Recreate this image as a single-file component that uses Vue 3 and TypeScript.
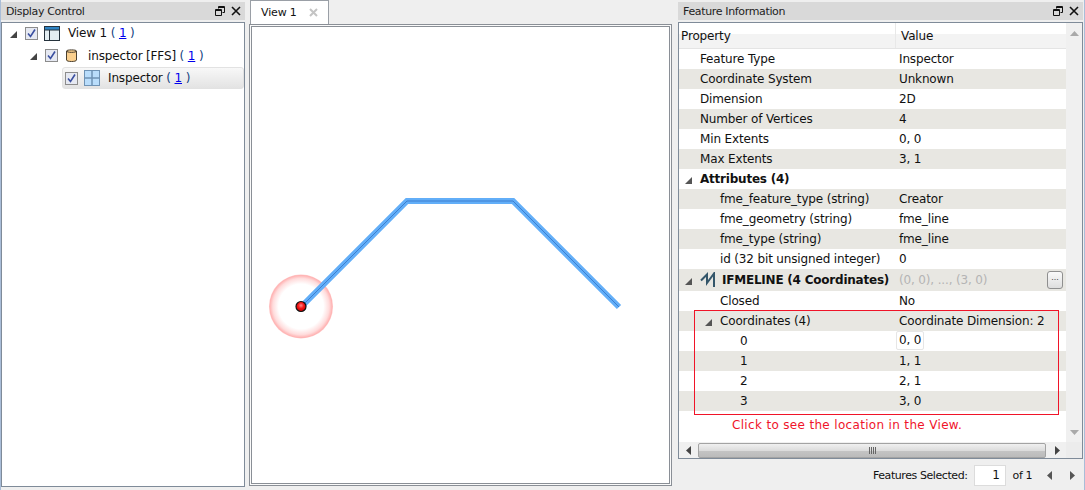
<template>
  <div class="app">
    <section class="dock left">
      <header class="dock-title">
        <span>Display Control</span>
        <span class="title-btns">
          <svg width="10" height="10" viewBox="0 0 10 10"><path d="M3.500 2.500V.5h6v6H7.500M.5 3.500h6v6h-6zM.5 4.500h6M3.500 1.500h6" fill="none" stroke="#111" /></svg>
          <svg width="10" height="10" viewBox="0 0 10 10"><path d="M1 1l8 8M9 1l-8 8" stroke="#111" stroke-width="1.600" /></svg>
        </span>
      </header>
      <div class="dock-body tree">
        <div class="node lvl0">
          <svg class="twist" width="7" height="7" viewBox="0 0 7 7"><polygon points="7,0 7,7 0,7" fill="#444" /></svg>
          <svg class="check" width="13" height="13" viewBox="0 0 13 13"><rect x=".5" y=".5" width="12" height="12" fill="#e6e9f2" stroke="#8c8c8c" /><path d="M3 6.500l2.500 3L10 2.500" fill="none" stroke="#3a4fa0" stroke-width="1.600" /></svg>
          <svg class="icon" width="16" height="15" viewBox="0 0 16 15"><rect x=".5" y=".5" width="15" height="14" fill="#e4eef2" stroke="#25323c" /><rect x="1" y="1" width="14" height="3" fill="#2f84c4" /><path d="M5.500 4v10M1 4h14" stroke="#25323c" /></svg>
          <span class="label">View 1 <span class="paren">(</span> <a class="link">1</a> <span class="paren">)</span></span>
        </div>
        <div class="node lvl1">
          <svg class="twist" width="7" height="7" viewBox="0 0 7 7"><polygon points="7,0 7,7 0,7" fill="#444" /></svg>
          <svg class="check" width="13" height="13" viewBox="0 0 13 13"><rect x=".5" y=".5" width="12" height="12" fill="#e6e9f2" stroke="#8c8c8c" /><path d="M3 6.500l2.500 3L10 2.500" fill="none" stroke="#3a4fa0" stroke-width="1.600" /></svg>
          <svg class="icon" width="11" height="15" viewBox="0 0 11 15"><path d="M.5 3C.5 1.500 10.500 1.500 10.500 3v9c0 2-10 2-10 0z" fill="#fbd08e" stroke="#4a4030" /><path d="M.5 3c0 1.800 10 1.800 10 0" fill="none" stroke="#4a4030" /></svg>
          <span class="label">inspector [FFS] <span class="paren">(</span> <a class="link">1</a> <span class="paren">)</span></span>
        </div>
        <div class="node lvl2">
          <svg class="check" width="13" height="13" viewBox="0 0 13 13"><rect x=".5" y=".5" width="12" height="12" fill="#e6e9f2" stroke="#8c8c8c" /><path d="M3 6.500l2.500 3L10 2.500" fill="none" stroke="#3a4fa0" stroke-width="1.600" /></svg>
          <svg class="icon" width="16" height="16" viewBox="0 0 16 16"><rect x=".5" y=".5" width="15" height="15" fill="#b9ddfb" stroke="#6f93b5" /><path d="M8 0v16M0 8h16" stroke="#6f93b5" stroke-width="1.500" /></svg>
          <span class="label">Inspector <span class="paren">(</span> <a class="link">1</a> <span class="paren">)</span></span>
        </div>
      </div>
    </section>

    <section class="center">
      <div class="tab">
        <span>View 1</span>
        <svg width="9" height="9" viewBox="0 0 9 9"><path d="M1 1l7 7M8 1l-7 7" stroke="#c4c4c4" stroke-width="2" /></svg>
      </div>
      <div class="pane">
        <div class="canvas">
          <svg width="100%" height="100%">
            <defs>
              <radialGradient id="halo">
                <stop offset="0.7" stop-color="#ffffff" />
                <stop offset="0.88" stop-color="#ffdcdc" />
                <stop offset="0.97" stop-color="#ffb4b4" />
                <stop offset="1" stop-color="#ffc8c8" />
              </radialGradient>
              <radialGradient id="ball" cx="0.5" cy="0.4" r="0.65">
                <stop offset="0" stop-color="#ff8a8a" />
                <stop offset="0.45" stop-color="#f51515" />
                <stop offset="1" stop-color="#c00000" />
              </radialGradient>
            </defs>
            <circle cx="49" cy="279.500" r="32" fill="url(#halo)" />
            <polyline :points="linePoints" fill="none" stroke="#62aef8" stroke-width="6" stroke-linejoin="miter" />
            <polyline :points="linePoints" fill="none" stroke="#3c7fd0" stroke-width="1" />
            <circle cx="49" cy="279.500" r="5" fill="url(#ball)" stroke="#111" stroke-width="1.200" />
          </svg>
        </div>
      </div>
    </section>

    <section class="dock right">
      <header class="dock-title">
        <span>Feature Information</span>
        <span class="title-btns">
          <svg width="10" height="10" viewBox="0 0 10 10"><path d="M3.500 2.500V.5h6v6H7.500M.5 3.500h6v6h-6zM.5 4.500h6M3.500 1.500h6" fill="none" stroke="#111" /></svg>
          <svg width="10" height="10" viewBox="0 0 10 10"><path d="M1 1l8 8M9 1l-8 8" stroke="#111" stroke-width="1.600" /></svg>
        </span>
      </header>
      <div class="info-box">
        <div class="info-main">
          <div class="table">
            <div class="thead">
              <div class="th first">Property</div>
              <div class="th second">Value</div>
            </div>
            <div
              v-for="row in rows"
              :key="row.name"
              class="row"
              :class="{ alt: row.alt, bold: row.kind === 'section', geom: row.kind === 'geom' }"
            >
              <div class="name" :style="{ paddingLeft: row.indent + 'px' }">
                <svg v-if="row.open" class="arrow" width="7" height="7" viewBox="0 0 7 7"><polygon points="7,0 7,7 0,7" fill="#555" /></svg>
                <svg v-if="row.kind === 'geom'" class="geom-icon" width="16" height="16" viewBox="0 0 16 16"><path d="M1 8.500L7 2.500V11L14 1.500V15" fill="none" stroke="#34566a" stroke-width="2" /></svg>
                <span>{{ row.name }}</span>
              </div>
              <div class="value" :class="{ muted: row.kind === 'geom' }">
                <span :class="{ focus: row.name === '0' }">{{ row.value }}</span>
              </div>
              <button v-if="row.kind === 'geom'" class="more">...</button>
            </div>
          </div>
          <div class="vscroll">
            <svg width="9" height="5" viewBox="0 0 9 5"><polygon points="4.500,0 9,5 0,5" fill="#a9a9a9" /></svg>
            <svg width="9" height="5" viewBox="0 0 9 5"><polygon points="0,0 9,0 4.500,5" fill="#a9a9a9" /></svg>
          </div>
        </div>
        <div class="hscroll">
          <svg class="h-arrow" width="5" height="9" viewBox="0 0 5 9"><polygon points="5,0 5,9 0,4.500" fill="#444" /></svg>
          <div class="thumb"><i></i><i></i><i></i><i></i></div>
          <svg class="h-arrow" width="5" height="9" viewBox="0 0 5 9"><polygon points="0,0 0,9 5,4.500" fill="#444" /></svg>
          <div class="corner"></div>
        </div>
        <div class="callout"></div>
        <div class="callout-note">Click to see the location in the View.</div>
      </div>
      <footer class="pager">
        <span>Features Selected:</span>
        <span class="page-input">1</span>
        <span class="of">of 1</span>
        <svg width="5" height="9" viewBox="0 0 5 9"><polygon points="5,0 5,9 0,4.500" fill="#555" /></svg>
        <svg class="next" width="5" height="9" viewBox="0 0 5 9"><polygon points="0,0 0,9 5,4.500" fill="#555" /></svg>
      </footer>
    </section>
  </div>
</template>

<script setup lang="ts">
interface Row {
  name: string;
  value: string;
  indent: number;
  alt?: boolean;
  open?: boolean;
  kind?: 'section' | 'geom';
}

const linePoints = '49,280 155,174 261,174 367,280';

const rows: Row[] = [
  { name: 'Feature Type', value: 'Inspector', indent: 21 },
  { name: 'Coordinate System', value: 'Unknown', indent: 21, alt: true },
  { name: 'Dimension', value: '2D', indent: 21 },
  { name: 'Number of Vertices', value: '4', indent: 21, alt: true },
  { name: 'Min Extents', value: '0, 0', indent: 21 },
  { name: 'Max Extents', value: '3, 1', indent: 21, alt: true },
  { name: 'Attributes (4)', value: '', indent: 6, open: true, kind: 'section' },
  { name: 'fme_feature_type (string)', value: 'Creator', indent: 41, alt: true },
  { name: 'fme_geometry (string)', value: 'fme_line', indent: 41 },
  { name: 'fme_type (string)', value: 'fme_line', indent: 41, alt: true },
  { name: 'id (32 bit unsigned integer)', value: '0', indent: 41 },
  { name: 'IFMELINE (4 Coordinates)', value: '(0, 0), ..., (3, 0)', indent: 6, alt: true, open: true, kind: 'geom' },
  { name: 'Closed', value: 'No', indent: 41 },
  { name: 'Coordinates (4)', value: 'Coordinate Dimension: 2', indent: 26, alt: true, open: true },
  { name: '0', value: '0, 0', indent: 61 },
  { name: '1', value: '1, 1', indent: 61, alt: true },
  { name: '2', value: '2, 1', indent: 61 },
  { name: '3', value: '3, 0', indent: 61, alt: true },
];
</script>

<style>
html,
body {
  margin: 0;
  overflow: hidden;
}
</style>

<style scoped>
.app {
  display: flex;
  box-sizing: border-box;
  width: 1085px;
  height: 490px;
  background: #efefef;
  border-left: 1px solid #a9bdd8;
  border-right: 1px solid #a9bdd8;
  font-family: "DejaVu Sans", sans-serif;
  font-size: 12px;
  letter-spacing: -0.15px;
  color: #111;
}

.dock {
  display: flex;
  flex-direction: column;
}

.left {
  width: 244px;
  padding-bottom: 3px;
}

.right {
  width: 405px;
  margin-left: 6px;
}

.dock-title {
  display: flex;
  justify-content: space-between;
  align-items: center;
  flex: none;
  height: 18px;
  margin-top: 2px;
  padding: 0 4px 0 5px;
  background: #d9d9d9;
  font-size: 11px;
  letter-spacing: -0.35px;
  color: #222;
}

.title-btns {
  display: flex;
  align-items: center;
  gap: 6px;
}

.dock-body {
  flex: 1;
  margin-top: 2px;
  background: #fff;
  border: 1px solid #7f8b99;
}

.node {
  display: flex;
  align-items: center;
  box-sizing: border-box;
}

.lvl0 {
  height: 20px;
  padding-left: 8px;
}

.lvl1 {
  height: 24px;
  padding: 1px 0 0 28px;
}

.lvl2 {
  height: 22px;
  margin-left: 60px;
  padding-left: 2px;
  border: 1px solid #e2e2e2;
  border-radius: 3px;
  background: linear-gradient(#f8f8f8, #e3e3e3);
}

.twist {
  margin-right: 8px;
  margin-top: 2px;
}

.check {
  margin-right: 6px;
}

.lvl1 .icon {
  margin: 0 11px 0 2px;
}

.lvl0 .icon,
.lvl2 .icon {
  margin-right: 8px;
}

.paren {
  color: #123f80;
}

.link {
  color: #0000ee;
  text-decoration: underline;
}

.center {
  display: flex;
  flex-direction: column;
  width: 423px;
  margin-left: 4px;
  padding-bottom: 4px;
}

.tab {
  display: flex;
  align-items: center;
  gap: 12px;
  box-sizing: border-box;
  width: 79px;
  height: 25px;
  margin-left: 1px;
  padding: 0 0 2px 10px;
  background: #fff;
  border: 1px solid #9a9fa6;
  border-bottom: none;
  font-size: 11px;
}

.pane {
  flex: 1;
  display: flex;
  margin-top: -1px;
  padding: 1px;
  background: #fafafa;
  border: 1px solid #8a8f96;
}

.canvas {
  flex: 1;
  background: #fff;
  border: 1px solid #8a8f96;
}

.canvas svg {
  display: block;
}

.info-box {
  position: relative;
  display: flex;
  flex-direction: column;
  flex: none;
  height: 435px;
  margin-top: 2px;
  background: #fff;
  border: 1px solid #7f8b99;
}

.info-main {
  display: flex;
  flex: 1;
  min-height: 0;
}

.table {
  flex: 1;
}

.thead {
  display: flex;
  height: 26px;
  box-sizing: border-box;
  border-bottom: 1px solid #e4e4e4;
  background: linear-gradient(#ffffff 45%, #f3f3f3 46%);
}

.th {
  display: flex;
  align-items: center;
  box-sizing: border-box;
}

.first {
  width: 217px;
  padding-left: 2px;
  border-right: 1px solid #e8e8e8;
}

.second {
  flex: 1;
  padding-left: 5px;
}

.row {
  position: relative;
  display: flex;
  align-items: center;
  height: 20px;
}

.row.alt {
  background: #e8e7e2;
}

.row.geom {
  height: 22px;
}

.row.bold .name,
.row.geom .name {
  font-weight: bold;
  letter-spacing: -0.22px;
}

.name {
  display: flex;
  align-items: center;
  box-sizing: border-box;
  width: 220px;
  white-space: nowrap;
}

.arrow {
  margin-right: 8px;
  margin-top: 2px;
}

.geom-icon {
  margin-right: 6px;
}

.value {
  white-space: nowrap;
}

.value.muted {
  color: #b4b4b4;
}

.focus {
  display: inline-block;
  margin: -1px 0 0 -3px;
  padding: 1px 2px 2px;
  background: #fff;
  border: 1px solid #e6e6e6;
  border-radius: 2px;
}

.more {
  position: absolute;
  right: 3px;
  top: 2px;
  width: 16px;
  height: 18px;
  padding: 0 0 6px;
  border: 1px solid #8f8f8f;
  border-radius: 3px;
  background: linear-gradient(#fafafa, #dedede);
  font-size: 9px;
  line-height: 9px;
  color: #444;
}

.vscroll {
  display: flex;
  flex-direction: column;
  justify-content: space-between;
  align-items: center;
  box-sizing: border-box;
  width: 16px;
  padding: 8px 0 7px;
  background: #f0f0f0;
}

.hscroll {
  display: flex;
  align-items: center;
  flex: none;
  height: 16px;
  padding-left: 7px;
  background: #f0f0f0;
}

.thumb {
  display: flex;
  justify-content: center;
  align-items: center;
  gap: 1px;
  box-sizing: border-box;
  width: 348px;
  height: 15px;
  margin: 0 9px 0 7px;
  border: 1px solid #a3a3a3;
  border-radius: 2px;
  background: linear-gradient(#f0f0f0, #dcdcdc 50%, #c4c4c4 52%, #bbb);
}

.thumb i {
  width: 1px;
  height: 7px;
  background: #666;
}

.corner {
  flex: none;
  width: 16px;
  height: 16px;
  margin-left: auto;
  background: #ececec;
}

.callout {
  position: absolute;
  left: 15px;
  top: 287px;
  width: 363px;
  height: 103px;
  border: 1px solid #f01428;
  pointer-events: none;
}

.callout-note {
  position: absolute;
  left: 53px;
  top: 395px;
  color: #f0142a;
  letter-spacing: 0.33px;
  white-space: nowrap;
}

.pager {
  flex: 1;
  display: flex;
  align-items: center;
  justify-content: flex-end;
  padding: 2px 8px 0 0;
  font-size: 11px;
  letter-spacing: -0.42px;
}

.page-input {
  box-sizing: border-box;
  width: 32px;
  height: 21px;
  margin: 0 7px 0 6px;
  padding-right: 5px;
  line-height: 19px;
  text-align: right;
  background: #fff;
  border: 1px solid #dcdcdc;
  font-size: 12px;
}

.of {
  margin-right: 15px;
}

.next {
  margin-left: 18px;
}
</style>
